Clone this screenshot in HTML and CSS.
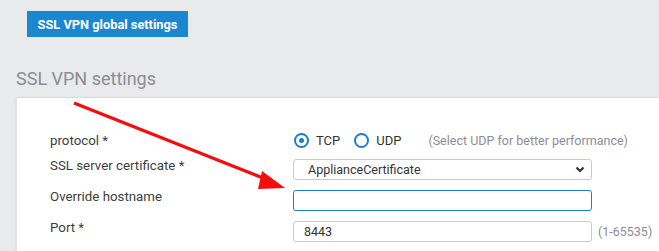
FILE: index.html
```html
<!DOCTYPE html>
<html lang="en">
<head>
    <meta charset="UTF-8">
    <title>SSL VPN settings</title>
    <link rel="stylesheet" href="styles.css">
</head>
<body>
    <div class="top-bar">
        <button class="global-btn">SSL VPN global settings</button>
    </div>

    <h2 class="section-title">SSL VPN settings</h2>

    <div class="panel">
        <div class="form-row row-protocol">
            <label class="field-label">protocol *</label>
            <div class="field radios">
                <label class="radio checked"><span class="dot"></span>TCP</label>
                <label class="radio"><span class="dot"></span>UDP</label>
                <span class="hint">(Select UDP for better performance)</span>
            </div>
        </div>
        <div class="form-row">
            <label class="field-label">SSL server certificate *</label>
            <div class="field">
                <div class="select">
                    <span>ApplianceCertificate</span>
                    <svg class="chevron" width="10" height="7" viewBox="0 0 10 7">
                        <path d="M1.5 1.5 L5 5 L8.5 1.5" fill="none" stroke="#333" stroke-width="2.2"/>
                    </svg>
                </div>
            </div>
        </div>
        <div class="form-row">
            <label class="field-label">Override hostname</label>
            <div class="field">
                <div class="input focused"></div>
            </div>
        </div>
        <div class="form-row">
            <label class="field-label">Port *</label>
            <div class="field">
                <div class="input"><span class="port-value">8443</span></div>
                <span class="range">(1-65535)</span>
            </div>
        </div>
    </div>

    <!-- red pointer arrow drawn over the form -->
    <svg class="pointer" width="659" height="251" viewBox="0 0 659 251">
        <line x1="74" y1="103" x2="268" y2="180" stroke="#f50d0d" stroke-width="3.2"/>
        <polygon points="285,188 262,171 258,189" fill="#f50d0d"/>
    </svg>
</body>
</html>
```

FILE: styles.css
```css
* {
    margin: 0;
    padding: 0;
    box-sizing: border-box;
}

body {
    font-family: Roboto, "Liberation Sans", sans-serif;
    background: #e9eaec;
    width: 659px;
    height: 251px;
    overflow: hidden;
    position: relative;
}

.top-bar {
    padding: 11px 0 0 27px;
}

.global-btn {
    background: #1b87cf;
    color: #fff;
    border: none;
    height: 26px;
    padding: 0;
    width: 161px;
    font-family: inherit;
    font-size: 12.8px;
    font-weight: 700;
}

.section-title {
    font-weight: 400;
    font-size: 18px;
    color: #8b8e92;
    margin: 31px 0 0 16px;
    line-height: 22px;
}

.panel {
    background: #fff;
    margin: 7px 0 0 16px;
    border-top: 1px solid #dcdcdc;
    border-left: 1px solid #e0e0e0;
    box-shadow: -1px 0 2px rgba(0, 0, 0, 0.05);
    padding: 33px 0 20px 33px;
    height: 160px;
}

.form-row {
    display: flex;
    height: 21px;
    margin-top: 10px;
}

.form-row.row-protocol {
    margin-top: 0;
    height: 19px;
    margin-bottom: -1px;
}

.field-label {
    width: 243px;
    font-size: 13.3px;
    color: #3d3d3d;
    line-height: 14px;
    flex-shrink: 0;
}

.row-protocol .field-label {
    line-height: 19px;
}

.field {
    display: flex;
    align-items: center;
}

.radios {
    font-size: 13px;
    color: #333;
}

.radio {
    display: flex;
    align-items: center;
    margin-right: 13px;
}

.radio .dot {
    width: 15px;
    height: 15px;
    border: 2px solid #1b7fcc;
    border-radius: 50%;
    margin: 0 7px 0 1px;
    position: relative;
}

.radio.checked .dot::after {
    content: "";
    position: absolute;
    width: 5px;
    height: 5px;
    left: 3px;
    top: 3px;
    border-radius: 50%;
    background: #1b7fcc;
}

.hint {
    margin-left: 14px;
    font-size: 12.5px;
    color: #8b8e92;
}

.select,
.input {
    width: 299px;
    height: 21px;
    border: 1px solid #c9cacc;
    border-radius: 3px;
    display: flex;
    align-items: center;
    font-size: 12.5px;
    color: #333;
}

.select {
    padding: 0 6px 0 14px;
    justify-content: space-between;
}

.input {
    padding-left: 10px;
}

.input.focused {
    border-color: #1b7fcc;
}

.range {
    margin-left: 6px;
    font-size: 12.5px;
    color: #8b8e92;
}

.pointer {
    position: absolute;
    left: 0;
    top: 0;
    pointer-events: none;
}
```
